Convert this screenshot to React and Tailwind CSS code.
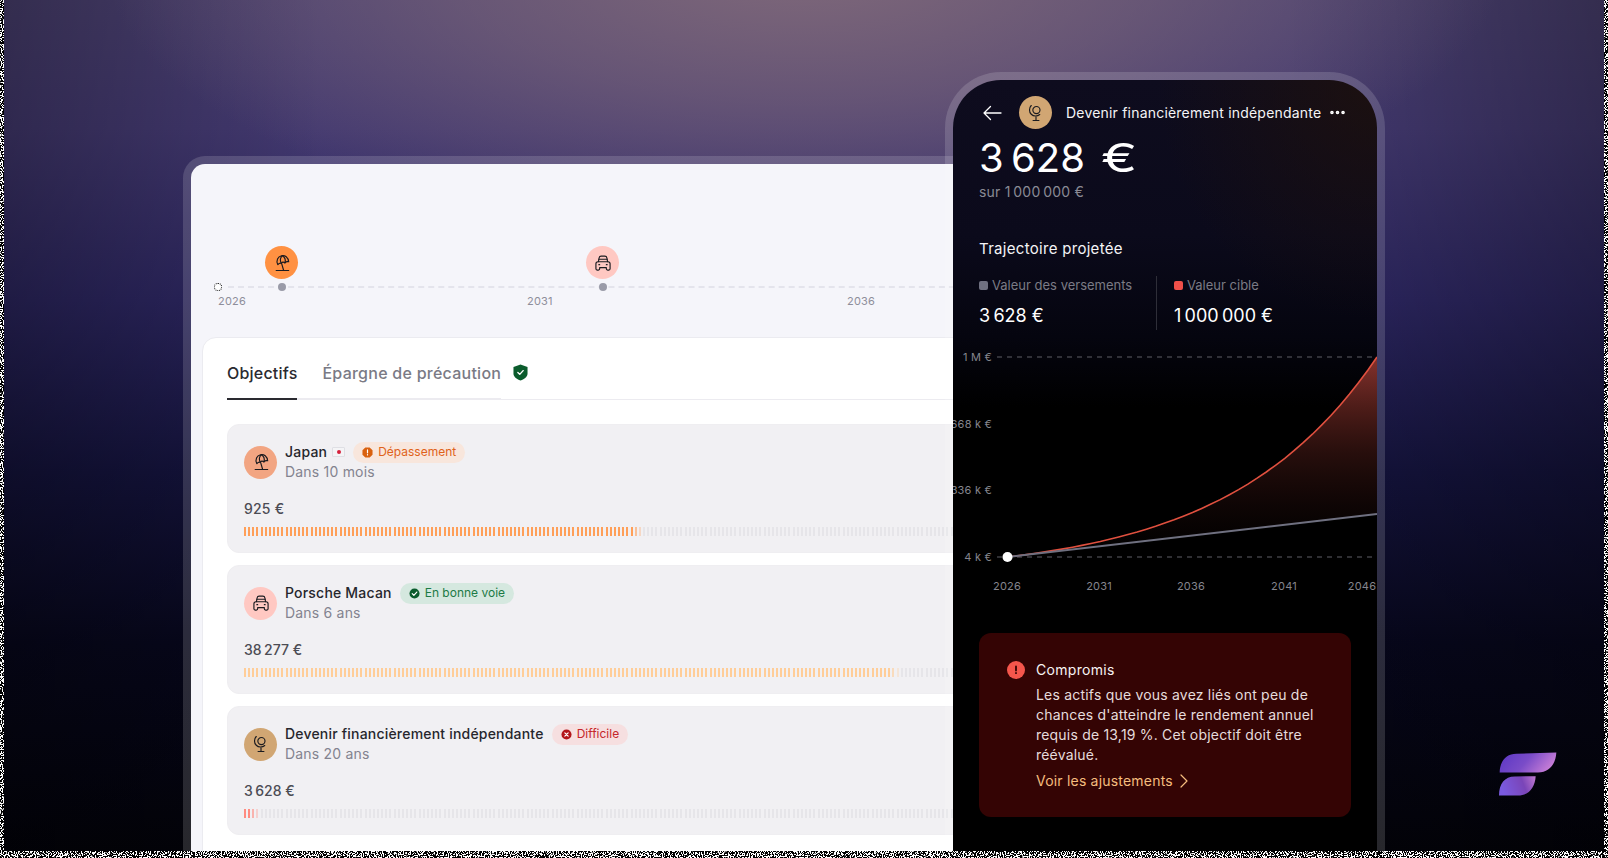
import { ChevronRight, Ellipsis } from 'lucide-react'

const NB = '\u202f'

function UmbrellaIcon({ className }) {
  return (
    <svg viewBox="0 0 24 24" fill="none" stroke="currentColor" strokeWidth="1.4" strokeLinecap="round" strokeLinejoin="round" className={className}>
      <path d="M5 21h15" />
      <path d="M11.500 12.500 14 21" />
      <path d="M7 14C4.500 9 7 4.500 11.500 3.300 15.500 2.300 19.500 5 20 10.500 18 10 16.500 10.500 15.500 11.800 14 10.800 12 11 11 12.300 9.500 12 8 12.800 7 14z" />
      <path d="M11 12.300C9.500 9 10 5.500 12.500 3.200" />
      <path d="M15.500 11.800C16.500 8.500 15.500 5 12.500 3.200" />
    </svg>
  )
}

function CarIcon({ className }) {
  return (
    <svg viewBox="0 0 24 24" fill="none" stroke="currentColor" strokeWidth="1.4" strokeLinecap="round" strokeLinejoin="round" className={className}>
      <path d="M6.500 10.500 7.300 6c.2-1.200 1.200-2.200 2.500-2.200h4.400c1.300 0 2.300 1 2.500 2.200l.8 4.500" />
      <path d="M7 7.500h10" />
      <path d="M3.500 13c0-1.500 1-2.500 2.500-2.500h12c1.500 0 2.500 1 2.500 2.500v6c0 .9-.7 1.500-1.500 1.500h-1.500c-.8 0-1.500-.6-1.500-1.500v-1.500H8V19c0 .9-.7 1.500-1.500 1.500H5c-.8 0-1.500-.6-1.500-1.500z" />
      <path d="M7 14h1M16 14h1" />
    </svg>
  )
}

function GlobeIcon({ className }) {
  return (
    <svg viewBox="0 0 24 24" fill="none" stroke="currentColor" strokeWidth="1.4" strokeLinecap="round" strokeLinejoin="round" className={className}>
      <circle cx="12.500" cy="8.500" r="4.300" />
      <path d="M6.300 3c-2.800 3-2.800 7.700 0 10.500 2.800 2.700 7.200 2.800 10.200.3" />
      <path d="M12 16.500V21M8.500 21h7" />
    </svg>
  )
}

function StatusIcon({ type }) {
  if (type === 'over') {
    return (
      <svg viewBox="0 0 12 12" className="w-[11px] h-[11px]">
        <path d="M3.600 .5h4.800l3.100 3.100v4.800l-3.100 3.100H3.600L.5 8.400V3.600z" fill="#d9610f" />
        <path d="M6 3v3.400M6 8.400v.2" stroke="#fff" strokeWidth="1.300" strokeLinecap="round" />
      </svg>
    )
  }
  if (type === 'good') {
    return (
      <svg viewBox="0 0 12 12" className="w-[11px] h-[11px]">
        <circle cx="6" cy="6" r="5.500" fill="#0b5c2d" />
        <path d="M3.500 6.200 5.300 8l3.200-3.600" fill="none" stroke="#fff" strokeWidth="1.300" strokeLinecap="round" strokeLinejoin="round" />
      </svg>
    )
  }
  return (
    <svg viewBox="0 0 12 12" className="w-[11px] h-[11px]">
      <circle cx="6" cy="6" r="5.500" fill="#b3161b" />
      <path d="M4.200 4.200 7.800 7.800M7.800 4.200 4.200 7.800" stroke="#fff" strokeWidth="1.300" strokeLinecap="round" />
    </svg>
  )
}

const goals = [
  {
    name: 'Japan',
    flag: true,
    when: 'Dans 10 mois',
    amount: '925 €',
    icon: UmbrellaIcon,
    iconBg: 'bg-[#f2a582]',
    status: 'over',
    label: 'Dépassement',
    badge: 'bg-[#f8e6dc] text-[#e0621a]',
    on: 96,
    tick: 'bg-[#ff9f58]',
  },
  {
    name: 'Porsche Macan',
    when: 'Dans 6 ans',
    amount: `38${NB}277 €`,
    icon: CarIcon,
    iconBg: 'bg-[#ffc8c2]',
    status: 'good',
    label: 'En bonne voie',
    badge: 'bg-[#d5e8df] text-[#1c7a45]',
    on: 158,
    tick: 'bg-[#ffcd98]',
  },
  {
    name: 'Devenir financièrement indépendante',
    when: 'Dans 20 ans',
    amount: `3${NB}628 €`,
    icon: GlobeIcon,
    iconBg: 'bg-[#d1a673]',
    status: 'hard',
    label: 'Difficile',
    badge: 'bg-[#f6dfe0] text-[#c5262b]',
    on: 4,
    tick: 'bg-[#ff8b80]',
  },
]

function JapanFlag() {
  return (
    <span className="-ml-[3px] w-[13px] h-[10px] bg-[#f4f4f6] border border-[#dfdfe4] rounded-[1px] grid place-items-center">
      <span className="w-1 h-1 rounded-full bg-[#d5203c]" />
    </span>
  )
}

function GoalCard({ goal }) {
  const Icon = goal.icon
  return (
    <div className="h-[129px] rounded-xl bg-[#f1f0f3] border border-[#efeef1] px-4 pt-[17px] overflow-hidden">
      <div className="flex items-center gap-2">
        <div className={`w-[33px] h-[33px] rounded-full grid place-items-center shrink-0 ${goal.iconBg}`}>
          <Icon className="w-5 h-5 text-[#1b1b20]" />
        </div>
        <div>
          <div className="flex items-center gap-2 h-5">
            <span className="text-sm leading-5 font-medium text-[#26262c]">{goal.name}</span>
            {goal.flag && <JapanFlag />}
            <span className={`h-[21px] px-[9px] rounded-full flex items-center gap-[5px] text-xs tracking-normal ${goal.badge}`}>
              <StatusIcon type={goal.status} />
              {goal.label}
            </span>
          </div>
          <div className="text-sm leading-5 text-[#83838f]">{goal.when}</div>
        </div>
      </div>
      <div className="mt-[17px] text-sm leading-5 font-medium text-[#4c4c54]">{goal.amount}</div>
      <div className="mt-2 h-[9px] flex gap-[2.170px]">
        {Array.from({ length: 180 }, (_, i) => {
          // the last two filled ticks fade into the empty track
          const fade = i === goal.on - 1 ? 'opacity-30' : i === goal.on - 2 ? 'opacity-60' : ''
          return <span key={i} className={`w-[2px] shrink-0 ${i < goal.on ? `${goal.tick} ${fade}` : 'bg-[#e6e5e9]'}`} />
        })}
      </div>
    </div>
  )
}

function DesktopPanel() {
  return (
    <div className="ml-[183px] mt-[156px] w-[880px] h-[702px] p-2 pb-0 rounded-t-[22px] bg-white/15">
      <div className="h-full rounded-t-[14px] bg-[#f5f5fa] overflow-hidden">
        <div className="relative h-[173px]">
          <div className="absolute left-[37px] right-0 top-[122px] border-t-2 border-dashed border-[#e4e4ec]" />
          <span className="absolute left-[23px] top-[119px] w-2 h-2 rounded-full bg-white border border-dotted border-black" />
          <span className="absolute left-[87px] top-[119px] w-2 h-2 rounded-full bg-[#9a9ba8]" />
          <div className="absolute left-[74px] top-[82px] w-[33px] h-[33px] rounded-full bg-[#ff9142] grid place-items-center">
            <UmbrellaIcon className="w-5 h-5 text-[#1b1b20]" />
          </div>
          <span className="absolute left-[408px] top-[119px] w-2 h-2 rounded-full bg-[#9a9ba8]" />
          <div className="absolute left-[395px] top-[82px] w-[33px] h-[33px] rounded-full bg-[#ffc8c2] grid place-items-center">
            <CarIcon className="w-5 h-5 text-[#1b1b20]" />
          </div>
          <span className="absolute left-[27px] top-[129px] text-[11px] leading-4 text-[#8e8e9a]">2026</span>
          <span className="absolute left-[336px] top-[129px] text-[11px] leading-4 text-[#8e8e9a]">2031</span>
          <span className="absolute left-[656px] top-[129px] text-[11px] leading-4 text-[#8e8e9a]">2036</span>
        </div>
        <div className="ml-[11px] h-full rounded-t-[14px] bg-white border border-[#ebebf0] px-6 pt-[23px]">
          <div className="flex items-stretch">
            <div className="pb-[13px] border-b-2 border-[#2a2a30] text-base leading-6 font-medium text-[#2a2a30]">Objectifs</div>
            <div className="pl-[25px] pb-[13px] border-b-2 border-[#ecebf0] text-base leading-6 font-medium tracking-[0.25px] text-[#7a7a85]">Épargne de précaution</div>
            <div className="flex-1 pl-3 pt-[3px] border-b border-[#ecebf0]">
              <svg viewBox="0 0 16 18" className="w-[15px] h-[17px]">
                <path d="M8 .5 15.500 3v7c0 3.500-3.200 6-7.500 7.500C3.700 16 .5 13.500.5 10V3z" fill="#0b5c2d" />
                <path d="M5.200 9 7.200 11l3.600-4" fill="none" stroke="#fff" strokeWidth="1.500" strokeLinecap="round" strokeLinejoin="round" />
              </svg>
            </div>
          </div>
          <div className="mt-6 flex flex-col gap-3">
            {goals.map(g => <GoalCard key={g.name} goal={g} />)}
          </div>
        </div>
      </div>
    </div>
  )
}

// exponential target curve, same shape as the projection
const curvePts = Array.from({ length: 41 }, (_, i) => {
  const t = i / 40
  const y = 212 - 200 * (Math.exp(2.5 * t) - 1) / (Math.exp(2.5) - 1)
  return [55 + 369 * t, y]
})
const curve = curvePts.map(([x, y], i) => `${i ? 'L' : 'M'}${x.toFixed(1)} ${y.toFixed(1)}`).join(' ')

const years = [
  { label: '2026', x: 54 },
  { label: '2031', x: 146 },
  { label: '2036', x: 238 },
  { label: '2041', x: 331 },
  { label: '2046', x: 409 },
]

function Chart() {
  return (
    <div className="relative mt-[15px] h-[255px]">
      <svg width="424" height="255" className="absolute inset-0">
        <defs>
          <linearGradient id="area" x1="0" y1="12" x2="0" y2="205" gradientUnits="userSpaceOnUse">
            <stop offset="0" stopColor="#b8443a" stopOpacity="0.72" />
            <stop offset="0.5" stopColor="#7a2c26" stopOpacity="0.32" />
            <stop offset="1" stopColor="#3a1614" stopOpacity="0.03" />
          </linearGradient>
        </defs>
        <path d="M44 12H424M44 212H424" stroke="#5e5e66" strokeDasharray="5 5" />
        <path d={`${curve} L424 169 L55 212 Z`} fill="url(#area)" />
        <path d={curve} fill="none" stroke="#e0503f" strokeWidth="1.600" />
        <path d="M55 212 L424 169" stroke="#6f7080" strokeWidth="2" />
        <circle cx="54.500" cy="212" r="5" fill="#fff" />
      </svg>
      <div className="absolute right-[385px] top-1 h-[216px] flex flex-col justify-between items-end text-[11px] leading-4 text-[#85858d] whitespace-nowrap">
        <span>1 M €</span>
        <span>668 k €</span>
        <span>336 k €</span>
        <span>4 k €</span>
      </div>
      {years.map(y => (
        <span key={y.label} className="absolute top-[233px] -translate-x-1/2 text-[11px] leading-4 text-[#85858d]" style={{ left: y.x }}>
          {y.label}
        </span>
      ))}
    </div>
  )
}

function PhonePanel() {
  return (
    <div className="absolute left-[945px] top-[72px] w-[440px] h-[786px] p-2 pb-0 rounded-t-[56px] bg-white/15">
      <div className="h-full rounded-t-[48px] overflow-hidden bg-[radial-gradient(ellipse_220px_240px_at_100%_0%,rgba(34,18,10,0.7)_0%,rgba(34,18,10,0)_100%),linear-gradient(180deg,#0e0c1e_0%,#0b0a1b_20%,#05050f_33%,#000000_42%)] text-white">
        <div className="flex items-center pl-[30px] pt-4">
          <svg viewBox="0 0 19 16" fill="none" stroke="currentColor" strokeWidth="1.300" strokeLinecap="round" strokeLinejoin="round" className="w-[19px] h-4 text-white">
            <path d="M1 8H18M7.500 1.500 1 8l6.500 6.500" />
          </svg>
          <div className="ml-[17px] w-[33px] h-[33px] rounded-full bg-[#d1a673] grid place-items-center">
            <GlobeIcon className="w-5 h-5 text-[#1b1b20]" />
          </div>
          <span className="ml-[14px] text-sm tracking-[0.2px] text-[#f4f4f6]">Devenir financièrement indépendante</span>
          <Ellipsis className="ml-[7px] w-[19px] h-[19px] text-white" strokeWidth={2.6} />
        </div>
        <div className="px-[26px]">
          <div className="mt-[7px] text-[40px] leading-[44px] tracking-[2.2px] whitespace-nowrap">
            3{NB}628 <span className="ml-[5px] inline-block origin-left scale-x-[1.36]">€</span>
          </div>
          <div className="mt-[2px] text-sm leading-5 text-[#8a8a95]">sur 1{NB}000{NB}000 €</div>
          <div className="mt-[35px] text-[15px] leading-6 tracking-[0.3px] text-[#f4f4f6]">Trajectoire projetée</div>
          <div className="mt-[15px] flex">
            <div className="w-[178px] border-r border-[#2e2e38]">
              <div className="flex items-center gap-1 text-[13px] leading-[18px] tracking-normal text-[#7b7b85]">
                <span className="w-[9px] h-[9px] rounded-[2px] bg-[#6f7080]" />
                Valeur des versements
              </div>
              <div className="mt-2 text-lg leading-7 tracking-normal">3{NB}628 €</div>
            </div>
            <div className="pl-[17px]">
              <div className="flex items-center gap-1 text-[13px] leading-[18px] tracking-normal text-[#7b7b85]">
                <span className="w-[9px] h-[9px] rounded-[2px] bg-[#f0504a]" />
                Valeur cible
              </div>
              <div className="mt-2 text-lg leading-7 tracking-normal">1{NB}000{NB}000 €</div>
            </div>
          </div>
        </div>
        <Chart />
        <div className="mt-[33px] ml-[26px] w-[372px] h-[184px] rounded-xl bg-[#340404] pl-[28px] pr-7 pt-[27px]">
          <div className="flex items-center gap-[11px]">
            <span className="w-[18px] h-[18px] rounded-full bg-[#f4564c] grid place-items-center">
              <svg viewBox="0 0 10 10" className="w-[10px] h-[10px]">
                <path d="M5 1.500v4M5 8v.2" stroke="#340404" strokeWidth="1.800" strokeLinecap="round" />
              </svg>
            </span>
            <span className="text-sm leading-5 tracking-[0.3px] text-[#f7f3f3]">Compromis</span>
          </div>
          <p className="ml-[29px] mt-[5px] text-sm leading-5 text-[#e6dcdc]">
            Les actifs que vous avez liés ont peu de chances d'atteindre le rendement annuel requis de 13,19 %. Cet objectif doit être réévalué.
          </p>
          <div className="ml-[29px] mt-[6px] h-5 flex items-center -space-x-px text-sm leading-5 text-[#f5bd7e]">
            <span>Voir les ajustements</span>
            <ChevronRight className="w-6 h-6" strokeWidth={1.2} />
          </div>
        </div>
      </div>
    </div>
  )
}

function Logo() {
  return (
    <svg viewBox="85 62 180 140" className="absolute left-[1498px] top-[751px] w-[60px] h-[47px]">
      <defs>
        <linearGradient id="leafA" x1="0" y1="0" x2="1" y2="0.3">
          <stop offset="0" stopColor="#5a36c4" />
          <stop offset="0.55" stopColor="#7a4cc8" />
          <stop offset="1" stopColor="#c27ad6" />
        </linearGradient>
        <linearGradient id="leafB" x1="0" y1="0.2" x2="1" y2="0">
          <stop offset="0" stopColor="#7a5ae0" />
          <stop offset="0.6" stopColor="#7a45b8" />
          <stop offset="1" stopColor="#c07ad0" />
        </linearGradient>
      </defs>
      <path d="M90 126C90 95 108 70 140 70 L260 66C258 100 240 126 205 126Z" fill="url(#leafA)" />
      <path d="M88 195C88 160 105 138 135 138L198 137C196 170 178 195 145 195Z" fill="url(#leafB)" />
    </svg>
  )
}

// the screenshot has a dithered, noisy edge on three sides
function NoiseEdge() {
  const strips = [
    { x: 0, y: 0, width: 4, height: 858 },
    { x: 1604, y: 0, width: 4, height: 858 },
    { x: 0, y: 851, width: 1608, height: 7 },
  ]
  return (
    <svg width="1608" height="858" className="absolute inset-0 pointer-events-none">
      <defs>
        <filter id="noise" x="0" y="0" width="1608" height="858" filterUnits="userSpaceOnUse" colorInterpolationFilters="sRGB">
          <feTurbulence type="fractalNoise" baseFrequency="0.85" numOctaves="2" seed="4" result="grain" />
          <feColorMatrix in="grain" values="0 0 0 0 1 0 0 0 0 1 0 0 0 0 1 30 0 0 0 -15" result="dots" />
          <feComposite in="dots" in2="SourceAlpha" operator="in" />
        </filter>
      </defs>
      {strips.map((s, i) => (
        <g key={i}>
          <rect {...s} fill="#000" />
          <rect {...s} fill="#fff" filter="url(#noise)" />
        </g>
      ))}
    </svg>
  )
}

export default function App() {
  return (
    <div
      className="relative w-[1608px] h-[858px] overflow-hidden tracking-[0.2px] font-['Inter',sans-serif] bg-[radial-gradient(ellipse_700px_280px_at_50%_-40px,#80697a_0%,rgba(128,105,122,0.55)_50%,rgba(128,105,122,0)_100%),linear-gradient(90deg,rgba(0,0,0,0.3)_0%,rgba(0,0,0,0)_20%,rgba(0,0,0,0)_80%,rgba(0,0,0,0.3)_100%),linear-gradient(180deg,#4a4070_0%,#433970_15%,#2c2660_35%,#14133c_55%,#07071c_75%,#020208_100%)]"
    >
      <div className="flex">
        <DesktopPanel />
      </div>
      <PhonePanel />
      <Logo />
      <NoiseEdge />
    </div>
  )
}
